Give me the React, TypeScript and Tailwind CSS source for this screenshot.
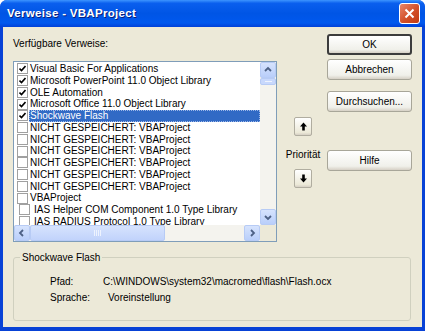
import React from "react";

const font = { fontFamily: '"Liberation Sans", Arial, sans-serif' };

const items: { label: string; checked: boolean; indent?: boolean }[] = [
  { label: "Visual Basic For Applications", checked: true },
  { label: "Microsoft PowerPoint 11.0 Object Library", checked: true },
  { label: "OLE Automation", checked: true },
  { label: "Microsoft Office 11.0 Object Library", checked: true },
  { label: "Shockwave Flash", checked: true },
  { label: "NICHT GESPEICHERT: VBAProject", checked: false },
  { label: "NICHT GESPEICHERT: VBAProject", checked: false },
  { label: "NICHT GESPEICHERT: VBAProject", checked: false },
  { label: "NICHT GESPEICHERT: VBAProject", checked: false },
  { label: "NICHT GESPEICHERT: VBAProject", checked: false },
  { label: "NICHT GESPEICHERT: VBAProject", checked: false },
  { label: "VBAProject", checked: false },
  { label: "IAS Helper COM Component 1.0 Type Library", checked: false, indent: true },
  { label: "IAS RADIUS Protocol 1.0 Type Library", checked: false, indent: true },
];

function Check({ checked }: { checked: boolean }) {
  return (
    <div className="w-[11px] h-[11px] bg-white border border-[#A0A0A0] flex items-center justify-center shrink-0">
      {checked && (
        <svg width="7" height="7" viewBox="0 0 7 7">
          <path d="M0.5 3.5 L2.5 5.5 L6.5 1" stroke="#000" strokeWidth="1.6" fill="none" />
        </svg>
      )}
    </div>
  );
}

function ScrollBtn({ dir }: { dir: "up" | "down" | "left" | "right" }) {
  const d = {
    up: "M2 6 L5 3 L8 6",
    down: "M2 4 L5 7 L8 4",
    left: "M6 2 L3 5 L6 8",
    right: "M4 2 L7 5 L4 8",
  }[dir];
  return (
    <div className="w-[16px] h-[16px] rounded-[2px] border border-[#B7CBF5] bg-[linear-gradient(to_bottom,#D6E3FD,#B9CEFA)] flex items-center justify-center shrink-0">
      <svg width="10" height="10" viewBox="0 0 10 10">
        <path d={d} stroke="#4D6185" strokeWidth="1.8" fill="none" />
      </svg>
    </div>
  );
}

function Button({ children, primary }: { children: React.ReactNode; primary?: boolean }) {
  return (
    <div
      className={`w-[85px] h-[21px] rounded-[3px] flex items-center justify-center text-[10px] text-black bg-[linear-gradient(to_bottom,#FFFFFF,#F0F0EA_80%,#D6D0C5)] ${
        primary ? "border-2 border-[#3C3C3C]" : "border border-[#A8A699]"
      }`}
    >
      {children}
    </div>
  );
}

function ArrowBtn({ up }: { up?: boolean }) {
  return (
    <div className="w-[18px] h-[19px] rounded-[2px] border border-[#B0ADA0] bg-[linear-gradient(to_bottom,#FFFFFF,#ECE9D8_85%,#D6D0C5)] flex items-center justify-center">
      <svg width="9" height="9" viewBox="0 0 9 9">
        {up ? (
          <path d="M4.5 0.5 L8 4.5 L5.8 4.5 L5.8 8.5 L3.2 8.5 L3.2 4.5 L1 4.5 Z" fill="#000" />
        ) : (
          <path d="M4.5 8.5 L8 4.5 L5.8 4.5 L5.8 0.5 L3.2 0.5 L3.2 4.5 L1 4.5 Z" fill="#000" />
        )}
      </svg>
    </div>
  );
}

export default function App() {
  return (
    <div className="w-[425px] h-[331px] flex flex-col bg-[#0842D6] rounded-t-[7px] overflow-hidden" style={font}>
      {/* Title bar */}
      <div className="h-[27px] shrink-0 flex items-center justify-between pl-[7px] pr-[5px] bg-[linear-gradient(to_bottom,#3D95FF_0%,#0A5FEE_12%,#0055E5_50%,#0058EE_85%,#0040D8_100%)]">
        <span className="text-white font-bold text-[11.5px] tracking-[0.3px] [text-shadow:1px_1px_0_#0A1E7A]">
          Verweise - VBAProject
        </span>
        <div className="w-[21px] h-[21px] rounded-[3px] border border-white bg-[linear-gradient(135deg,#E9866A,#D24F28_55%,#C13A12)] flex items-center justify-center">
          <svg width="11" height="11" viewBox="0 0 11 11">
            <path d="M1.5 1.5 L9.5 9.5 M9.5 1.5 L1.5 9.5" stroke="#fff" strokeWidth="2" />
          </svg>
        </div>
      </div>

      {/* Body */}
      <div className="flex-1 mx-[3px] mb-[4px] bg-[#ECE9D8] flex flex-col text-[10px] text-black">
        <div className="flex">
          {/* Left column */}
          <div className="ml-[10px] w-[264px] flex flex-col">
            <div className="pt-[10px] leading-[13px] mb-[11px]">Verfügbare Verweise:</div>
            <div className="w-[264px] h-[181px] border border-[#7F9DB9] bg-white flex flex-col">
              <div className="flex flex-1 min-h-0">
                <div className="flex-1 overflow-hidden pt-[1px] pl-[3px]">
                  {items.map((it, i) => {
                    const sel = it.label === "Shockwave Flash";
                    return (
                      <div key={i} className={`h-[11.75px] flex items-center ${it.indent ? "pl-[2px]" : ""}`}>
                        <Check checked={it.checked} />
                        <span
                          className={`ml-[1px] h-[11.75px] leading-[11.75px] whitespace-nowrap ${
                            it.indent ? "pl-[3px]" : "pl-[1px]"
                          } ${sel ? "bg-[#316AC5] text-white flex-1 outline outline-1 outline-dotted outline-[#9DB8E8] -outline-offset-1" : ""}`}
                        >
                          {it.label}
                        </span>
                      </div>
                    );
                  })}
                </div>
                {/* vertical scrollbar */}
                <div className="w-[16px] bg-[#F4F3EE] flex flex-col justify-between">
                  <div className="flex flex-col">
                    <ScrollBtn dir="up" />
                    <div className="h-[7px] rounded-[2px] border border-[#B7CBF5] bg-[#C8D8FC] flex flex-col items-center justify-center">
                      <div className="w-[7px] h-[1px] bg-[#EEF3FE]" />
                    </div>
                  </div>
                  <ScrollBtn dir="down" />
                </div>
              </div>
              {/* horizontal scrollbar */}
              <div className="h-[16px] flex shrink-0">
                <div className="flex-1 bg-[#F4F3EE] flex items-center">
                  <ScrollBtn dir="left" />
                  <div className="w-[135px] h-[16px] rounded-[2px] border border-[#B7CBF5] bg-[linear-gradient(to_bottom,#D6E3FD,#C1D3FB)] flex items-center justify-center gap-[1px]">
                    <div className="w-[1px] h-[6px] bg-[#EEF3FE]" />
                    <div className="w-[1px] h-[6px] bg-[#EEF3FE]" />
                    <div className="w-[1px] h-[6px] bg-[#EEF3FE]" />
                    <div className="w-[1px] h-[6px] bg-[#EEF3FE]" />
                  </div>
                  <div className="flex-1" />
                  <ScrollBtn dir="right" />
                </div>
                <div className="w-[16px] bg-[#ECE9D8]" />
              </div>
            </div>
          </div>

          {/* Middle column: priority */}
          <div className="w-[50px] flex flex-col items-center pt-[90px] pl-[2px]">
            <ArrowBtn up />
            <div className="mt-[12px] mb-[8px] leading-[13px]">Priorität</div>
            <ArrowBtn />
          </div>

          {/* Right column: buttons */}
          <div className="flex flex-col pt-[7px]">
            <Button primary>OK</Button>
            <div className="mt-[4px]">
              <Button>Abbrechen</Button>
            </div>
            <div className="mt-[11px]">
              <Button>Durchsuchen...</Button>
            </div>
            <div className="mt-[38px]">
              <Button>Hilfe</Button>
            </div>
          </div>
        </div>

        {/* Group box */}
        <fieldset className="mt-[9px] ml-[10px] w-[398px] h-[70px] border border-[#D0D0BF] rounded-[3px] px-[6px]">
          <legend className="px-[2px] leading-[13px]">Shockwave Flash</legend>
          <div className="grid grid-cols-[53px_1fr] pl-[30px] pt-[11px] gap-y-[3px] leading-[13px]">
            <span>Pfad:</span>
            <span>C:\WINDOWS\system32\macromed\flash\Flash.ocx</span>
            <span>Sprache:</span>
            <span className="pl-[5px]">Voreinstellung</span>
          </div>
        </fieldset>
      </div>
    </div>
  );
}
